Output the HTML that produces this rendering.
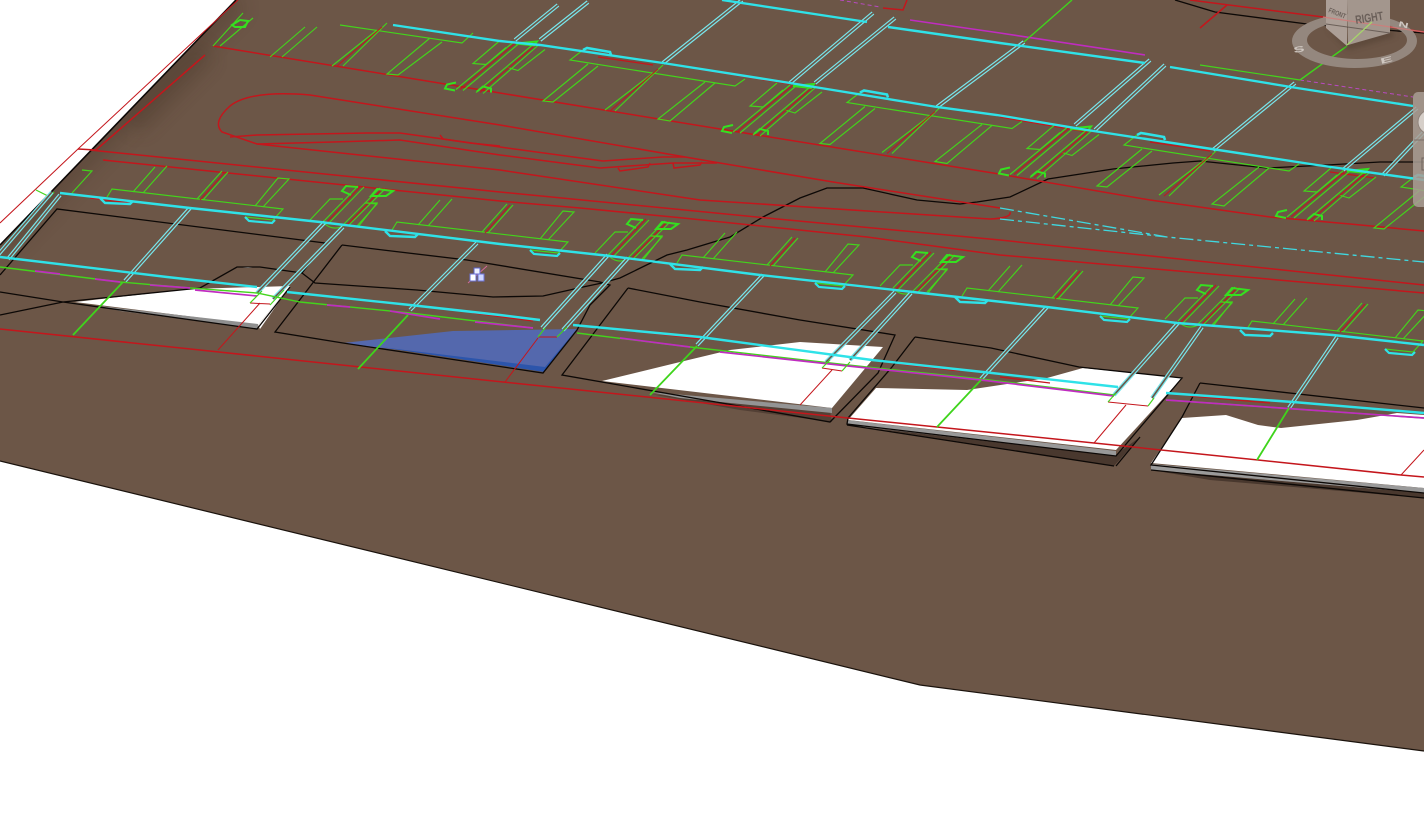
<!DOCTYPE html>
<html><head><meta charset="utf-8"><style>
html,body{margin:0;padding:0;background:#fff;width:1424px;height:831px;overflow:hidden}
svg{display:block}
.g{fill:none;stroke:#43d41c;stroke-width:1.15}
.gb{fill:none;stroke:#35e020;stroke-width:2}
.r{fill:none;stroke:#c4161c;stroke-width:1.5}
.rt{fill:none;stroke:#c4161c;stroke-width:1}
.k{fill:none;stroke:#0c0806;stroke-width:1.3}
.c{fill:none;stroke:#2fe2e8;stroke-width:2.4}
.m{fill:none;stroke:#c02cc0;stroke-width:1.6}
</style></head><body>
<svg width="1424" height="831" viewBox="0 0 1424 831" xmlns="http://www.w3.org/2000/svg">
<defs>
<filter id="b6" x="-30%" y="-30%" width="160%" height="160%"><feGaussianBlur stdDeviation="9"/></filter>
<filter id="b3" x="-30%" y="-30%" width="160%" height="160%"><feGaussianBlur stdDeviation="3"/></filter>
<clipPath id="terr"><polygon points="236,0 1424,0 1424,751 920,685 0,461 0,245"/></clipPath>
<g id="cs" fill="none">
<path d="M-3 256L52 192M8 259L60 195M125 281L190 208M257 293L325 222M273 299L343 227M410 310L477 243M542 328L608 255M563 330L628 258M697 345L763 275M826 362L895 292M850 360L911 293M981 379L1047 307M1114 395L1178 323M1152 398L1202 327M1289 408L1337 337"/>
<path d="M515 40L558 5M540 40L588 2M663 63L742 0M790 83L873 13M815 83L895 18M937 107L1024 42M1075 125L1150 60M1095 130L1165 65M1213 150L1295 83M1343 170L1417 108M1383 175L1424 132"/>
</g>
<g id="ub">
<path class="g" d="M583 50L570 60L735 86L745 79M588 64L543 101L553 102L598 66M705 82L658 119L670 121L715 83"/>
<path class="g" d="M653 73L605 110M663 65L615 111"/>
<path class="rt" stroke-width=".8" d="M658 69L610 111"/>
<path d="M583 50L587 48L610 52L611 55" fill="none" stroke="#2fe2e8" stroke-width="2.6"/>
</g>
<g id="uc">
<path class="g" d="M777 83L750 106L763 107L783 90M822 92L795 113L785 110"/>
<path class="g" d="M790 85L733 132M796 86L740 133M810 87L753 135M815 88L760 136"/>
<path class="rt" stroke-width=".8" d="M793 85L737 132M813 87L757 135"/>
<path class="gb" stroke-width="1.4" d="M733 125L724 127L722 131L732 133M754 134L760 129L768 131L768 135M793 86L814 84L811 88Z"/>
</g>
<g id="l">
<path class="g" d="M107 197L112 189L283 209L273 220L245 217M133 192L155 167M143 193L167 166M255 206L278 178L289 179L263 207M72 193L92 171L82 170M310 220L330 199L343 199M358 227L377 203L365 203M325 224Q333 231 343 226"/>
<path class="g" d="M197 199L222 171M203 200L228 172M323 222L358 186M328 224L364 187M343 225L380 188M348 226L385 189"/>
<path class="rt" stroke-width=".8" d="M200 200L225 172M326 223L361 186M346 226L383 188"/>
<path class="gb" stroke-width="1.4" d="M358 187L346 186L342 191L351 195M377 189L393 191L386 196L371 196Z"/>
<path d="M100 198L105 203L130 204L133 201" fill="none" stroke="#2fe2e8" stroke-width="2.4"/>
<path d="M245 217L249 221L272 223L275 220" fill="none" stroke="#2fe2e8" stroke-width="2.2"/>
</g>
</defs>

<polygon points="236,0 1424,0 1424,751 920,685 0,461 0,245" fill="#6c5647"/>
<g clip-path="url(#terr)">
<path d="M236 0L0 245" stroke="#4a372b" stroke-width="24" opacity=".35" filter="url(#b6)" fill="none"/>
<path d="M205 50L130 125" stroke="#4a372b" stroke-width="26" opacity=".3" filter="url(#b6)" fill="none"/>
</g>
<path d="M236 0L0 245" stroke="#0c0806" stroke-width="1.6" fill="none"/>
<path d="M0 461L920 685L1424 751" stroke="#1a120c" stroke-width="1.2" fill="none"/>
<path d="M238 0L78 149L0 223" class="rt"/>

<!-- shadows -->
<polygon points="650,394 830,411 832,422 740,410" fill="#43322a" opacity=".6"/>
<polygon points="848,424 1114,456 1140,437 1114,466" fill="#43322a" opacity=".85"/>
<polygon points="1151,470 1424,493 1424,498 1210,480" fill="#43322a" opacity=".85"/>

<!-- parcels -->
<polygon points="75,302 190,289 290,286 258,325" fill="#fff"/>
<polygon points="100,306 258,324 258,329 120,311" fill="#8f8f8f"/>
<polygon points="258,325 290,286 260,329" fill="#fff"/>
<polygon points="237,267 258,267 248,268" fill="#fff"/>
<polygon points="343,343 453,331 577,329 545,368" fill="#5468ad"/>
<polygon points="380,347 545,367 577,329 544,372" fill="#2c55ab"/>
<polygon points="602,381 680,362 730,350 800,342 883,347 832,408" fill="#fff"/>
<polygon points="650,392 832,408 832,413 680,398" fill="#949494"/>
<polygon points="848,420 876,388 967,390 1047,378 1083,368 1182,378 1116,450" fill="#fff"/>
<polygon points="847,420 1116,451 1116,456 847,425" fill="#999"/>
<polygon points="1182,418 1226,415 1258,425 1281,428 1357,420 1397,413 1424,415 1424,488 1151,463" fill="#fff"/>
<polygon points="1151,464 1424,488 1424,493 1151,470" fill="#9a9a9a"/>

<!-- black outlines -->
<path class="k" d="M0 275L57 209L325 243L302 273L315 283L417 290L493 297L543 296L583 287L602 283L620 278L667 255L687 250L730 237L763 217L800 198L827 188L863 188L917 200L960 204L977 202L1010 197L1048 179L1113 169L1173 163L1200 161L1267 168L1327 165L1380 162L1424 162"/>
<path class="k" d="M0 315L63 302L200 288L237 267L260 267L302 273M0 292L63 302L257 329L290 287"/>
<path class="k" d="M342 245L383 250L467 260L600 282L610 285L590 305L577 330L543 373L343 343L275 332L342 245"/>
<path class="k" d="M628 288L700 302L800 320L895 335L878 373L830 422L562 375L628 288"/>
<path class="k" d="M915 337L991 348L1079 367L1182 378L1116 456L847 424L848 418L892 367L915 337M1116 466L1140 437M847 425L1114 466"/>
<path class="k" d="M1200 383L1218 385L1424 408M1200 383L1182 417L1151 465L1424 493M1151 470L1424 498"/>
<path class="k" d="M1175 0L1215 12L1307 24L1424 33"/>

<!-- red roads -->
<path class="r" d="M213 46L500 93L720 129L993 173L1150 200L1270 217L1350 224L1424 231"/>
<path class="r" d="M1000 208L833 182L720 163L500 125L310 95Q250 90 230 106Q212 122 222 132L257 144L500 170L700 200L990 219Q1012 218 1010 212"/>
<path class="r" d="M230 137L257 135L367 133L400 133L500 147L603 161L663 157L685 157"/>
<path class="r" d="M257 144L333 142L400 140L500 155L600 168L673 163L717 163M440 135L443 139L470 143L500 146M618 168L620 171L648 167L650 163M673 163L674 168L700 165L702 162"/>
<path class="r" d="M90 150L500 192L767 218L1000 240L1424 285"/>
<path class="r" d="M103 160L393 190L500 201L580 208L683 218L867 237L1000 255L1424 293"/>
<path class="r" d="M205 55L96 150M78 149L96 150"/>
<path class="r" d="M0 329L200 350L503 382L848 418L937 427L1094 443L1258 460L1401 475L1424 477"/>
<path class="rt" d="M218 350L260 303M250 303L270 304M505 382L538 338M538 337L557 337M800 405L832 370M822 368L842 371M1094 443L1126 405M1108 402L1148 406M1401 475L1424 450"/>
<path class="r" d="M883 8L903 10L907 0M1190 0L1323 17L1424 32M1227 5L1200 28"/>
<path d="M598 57L653 65M697 69L790 84M1000 117L1087 132M1150 142L1210 151M1330 172L1375 178M90 198L130 203M835 284L870 288M473 313L533 321M610 328L700 339M900 364L960 371M1000 377L1050 383M1190 396L1270 403" fill="none" stroke="#c4161c" stroke-width="1.3"/>

<!-- white/cyan dash continuation -->
<path d="M1000 208L1167 237L1424 262M1000 219L1167 237" fill="none" stroke="#3fd8e0" stroke-width="1.3" stroke-dasharray="14 4 4 4"/>

<!-- green lots -->
<path class="g" d="M340 25L462 43L473 33M377 30L332 66M387 23L343 66M430 38L387 74L398 75L442 42"/>
<path class="rt" stroke-width=".8" d="M382 27L337 66"/>
<use href="#uc" transform="translate(-277,-42.5)"/>
<use href="#ub"/><use href="#uc"/>
<use href="#ub" transform="translate(277,42.5)"/><use href="#uc" transform="translate(277,42.5)"/>
<use href="#ub" transform="translate(554,85)"/><use href="#uc" transform="translate(554,85)"/>
<use href="#ub" transform="translate(831,127)"/>
<use href="#l"/>
<use href="#l" transform="translate(285,33)"/>
<use href="#l" transform="translate(570,66)"/>
<use href="#l" transform="translate(855,99)"/>
<use href="#l" transform="translate(1140,132)"/>
<path class="g" d="M213 46L243 13M220 46L253 18M270 57L305 27M282 57L317 27"/>
<path class="gb" stroke-width="1.4" d="M232 25L240 20L248 21L245 27L235 27Z"/>
<path class="g" d="M36 190L50 197L54 192M1200 65L1300 80"/>

<!-- cross-street doubles -->
<use href="#cs" stroke="#78e6ec" stroke-width="4"/>
<use href="#cs" stroke="#6c5647" stroke-width="1.6"/>

<!-- cyan main -->
<path class="c" d="M393 25L500 41L540 45L663 63L790 83L937 107L997 115L1087 130L1317 165L1424 180"/>
<path class="c" d="M60 193L190 208L320 222L500 244L610 256L760 275L913 292L1047 307L1177 323L1333 335L1424 345"/>
<path class="c" d="M0 257L167 277L257 287M287 292L410 305L500 315L540 320M573 325L700 337L872 360L983 372L1118 387M1166 393L1293 402L1424 413"/>
<path class="c" d="M722 0L867 22M888 27L1000 43L1145 63M1170 67L1297 88L1413 106"/>

<!-- magenta / green bottom -->
<path d="M0 267L120 282L190 288L257 293L300 302L410 313L533 328M577 333L690 347L848 365L981 379L1114 395M1166 400L1424 418" fill="none" stroke="#43d41c" stroke-width="1.4"/>
<path d="M35 271L60 274M95 279L120 282M150 285L190 288M195 290L257 296M327 305L350 307M390 311L440 319M475 322L533 328M620 338L690 347M720 352L848 366L981 380L1114 396M1166 400L1424 418" fill="none" stroke="#c02cc0" stroke-width="1.7"/>
<path d="M910 20L1000 33L1145 55" class="m"/>
<path d="M840 0L880 7M1300 80L1413 97" fill="none" stroke="#b84ac0" stroke-width="1" stroke-dasharray="4 3"/>

<!-- long green verticals -->
<path d="M123 282L73 335M408 315L358 369M697 346L650 395M981 380L937 427M1289 408L1257 460" fill="none" stroke="#3fd41c" stroke-width="1.8"/>
<path d="M1024 42L1072 0M1347 46L1300 80" fill="none" stroke="#3fd41c" stroke-width="1.4"/>
<path class="g" stroke-width="1.6" d="M250 303L262 291M270 305L284 290M538 337L545 328M557 337L567 327M822 368L830 360M842 371L850 362M1108 402L1116 393M1148 406L1154 398"/>

<!-- view cube -->
<path fill="#94877e" fill-rule="evenodd" d="M1292 41a62.500 27 0 1 0 125 0a62.500 27 0 1 0 -125 0ZM1307 40a50 19 0 1 0 100 0a50 19 0 1 0 -100 0Z"/>
<polygon points="1326,28 1348,50 1396,36 1390,30 1348,42" fill="#4a372b" opacity=".45" filter="url(#b3)"/>
<polygon points="1326,0 1347,0 1347,46 1326,28" fill="#ac9f97"/>
<polygon points="1347,0 1390,0 1390,33 1348,45" fill="#a3968d"/>
<path d="M1323 17L1424 32" stroke="#d47a78" stroke-width="1.2" opacity=".8"/>
<path d="M1326 24L1390 33" stroke="#6b5f58" stroke-width="1"/>
<path d="M1347 45L1372 22" stroke="#a6d66a" stroke-width="1.2"/>
<text x="1356" y="24" font-family="Liberation Sans,sans-serif" font-size="12" font-weight="bold" fill="#6a5f59" textLength="28" lengthAdjust="spacingAndGlyphs" transform="rotate(-9 1356 24)">RIGHT</text>
<text x="1328" y="12" font-family="Liberation Sans,sans-serif" font-size="7" font-weight="bold" fill="#6a5f59" textLength="18" lengthAdjust="spacingAndGlyphs" transform="rotate(22 1328 12)">FRONT</text>
<text x="0" y="0" font-family="Liberation Sans,sans-serif" font-size="11" font-weight="bold" fill="#cfc7c1" transform="translate(1294 53) rotate(-10) scale(1.5 .75)">S</text>
<text x="0" y="0" font-family="Liberation Sans,sans-serif" font-size="11" font-weight="bold" fill="#cfc7c1" transform="translate(1381 64) rotate(-14) scale(1.7 .7)">E</text>
<text x="0" y="0" font-family="Liberation Sans,sans-serif" font-size="10" font-weight="bold" fill="#cfc7c1" transform="translate(1398 26) rotate(14) scale(1.4 .75)">N</text>

<!-- nav bar -->
<rect x="1413" y="92" width="24" height="115" rx="5" fill="#a99d95" opacity=".85"/>
<circle cx="1430" cy="122" r="12" fill="#d6cfc9" stroke="#8f837b"/>
<path d="M1414 140H1424" stroke="#7d716a"/>
<rect x="1422" y="158" width="6" height="12" fill="none" stroke="#6f645e"/>

<!-- cursor -->
<path d="M468 283L487 266" stroke="#d06a9a" stroke-width="1"/>
<rect x="474" y="268" width="6" height="6" fill="#eef0ff" stroke="#5a62c8" stroke-width="1"/>
<rect x="470" y="274" width="6" height="7" fill="#fff" stroke="#6a72d8" stroke-width="1"/>
<rect x="478" y="274" width="6" height="7" fill="#cfd6ff" stroke="#6a72d8" stroke-width="1"/>
</svg>
</body></html>
